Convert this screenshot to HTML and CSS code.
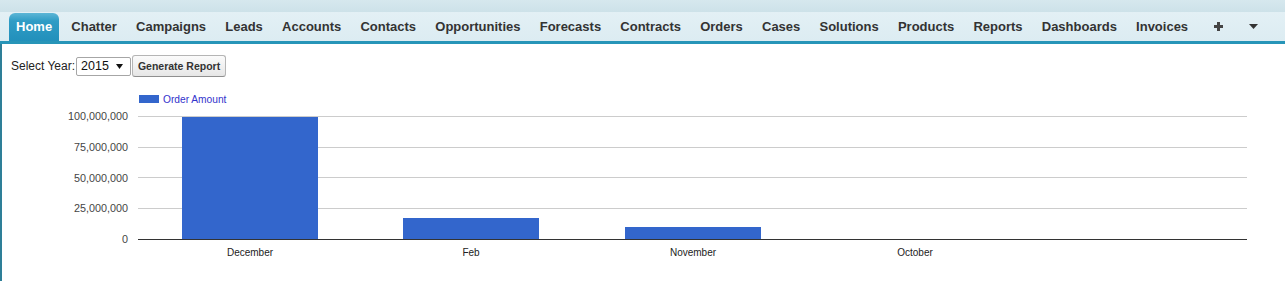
FILE: index.html
```html
<!DOCTYPE html>
<html lang="en">
<head>
<meta charset="utf-8">
<title>Orders by Month</title>
<link rel="stylesheet" href="styles.css">
</head>
<body>
<header class="topbar">
  <nav class="tabs">
    <a class="tab active" href="#">Home</a>
    <a class="tab" href="#">Chatter</a>
    <a class="tab" href="#">Campaigns</a>
    <a class="tab" href="#">Leads</a>
    <a class="tab" href="#">Accounts</a>
    <a class="tab" href="#">Contacts</a>
    <a class="tab" href="#">Opportunities</a>
    <a class="tab" href="#">Forecasts</a>
    <a class="tab" href="#">Contracts</a>
    <a class="tab" href="#">Orders</a>
    <a class="tab" href="#">Cases</a>
    <a class="tab" href="#">Solutions</a>
    <a class="tab" href="#">Products</a>
    <a class="tab" href="#">Reports</a>
    <a class="tab" href="#">Dashboards</a>
    <a class="tab" href="#">Invoices</a>
    <a class="tab tab-plus" href="#" aria-label="All Tabs">
      <svg class="ico" width="9" height="9" viewBox="0 0 9 9"><path d="M3 0h3v3h3v3H6v3H3V6H0V3h3z" fill="#444"/></svg>
    </a>
    <a class="tab tab-more" href="#" aria-label="More">
      <svg class="ico" width="9" height="5" viewBox="0 0 9 5"><path d="M0 0h9L4.5 5z" fill="#333"/></svg>
    </a>
  </nav>
</header>
<main class="content">
  <form class="controls">
    <label class="year-label" for="year">Select Year:</label>
    <span class="select-wrap">
      <select id="year" class="year-select">
        <option>2015</option>
        <option>2014</option>
        <option>2013</option>
      </select>
      <svg class="select-arrow" width="7" height="5" viewBox="0 0 7 5"><path d="M0 0h7L3.5 5z" fill="#111"/></svg>
    </span>
    <button type="button" class="btn">Generate Report</button>
  </form>
  <svg class="chart" width="1283" height="201" viewBox="0 0 1283 201">
    <rect x="137" y="15" width="20" height="8" fill="#3366cc"/>
    <text x="161" y="23" class="legend">Order Amount</text>

    <g class="grid">
      <line x1="136" y1="36.5" x2="1245" y2="36.5"/>
      <line x1="136" y1="67.5" x2="1245" y2="67.5"/>
      <line x1="136" y1="97.5" x2="1245" y2="97.5"/>
      <line x1="136" y1="128.5" x2="1245" y2="128.5"/>
    </g>

    <g class="ylabels">
      <text x="126" y="40">100,000,000</text>
      <text x="126" y="71">75,000,000</text>
      <text x="126" y="101.5">50,000,000</text>
      <text x="126" y="132">25,000,000</text>
      <text x="126" y="163">0</text>
    </g>

    <g class="bars">
      <rect x="180" y="37" width="136" height="122"/>
      <rect x="401" y="138" width="136" height="21"/>
      <rect x="623" y="147" width="136" height="12"/>
    </g>

    <line class="baseline" x1="136" y1="159.5" x2="1245" y2="159.5"/>

    <g class="xlabels">
      <text x="248" y="175.5">December</text>
      <text x="469" y="175.5">Feb</text>
      <text x="691" y="175.5">November</text>
      <text x="913" y="175.5">October</text>
    </g>
  </svg>
</main>
</body>
</html>
```
FILE: styles.css
```css
html, body {
  margin: 0;
  padding: 0;
  background: #ffffff;
}

body {
  font-family: "Liberation Sans", Arial, sans-serif;
  font-size: 12px;
  color: #222;
  width: 1285px;
  height: 281px;
  overflow: hidden;
}

.topbar {
  height: 41px;
  border-bottom: 3px solid #2795b8;
  background: linear-gradient(to bottom, #d6e8ee 0, #cde2e9 12px, #e3f0f5 12px, #dcecf2 41px);
}

.tabs {
  display: flex;
  align-items: flex-end;
  gap: 5.2px;
  height: 41px;
  box-sizing: border-box;
  padding: 13px 0 0 9px;
}

.tab {
  display: flex;
  align-items: center;
  height: 28px;
  box-sizing: border-box;
  padding: 0 7px 2px;
  font-weight: bold;
  font-size: 13px;
  color: #333;
  text-decoration: none;
  border-radius: 6px 6px 0 0;
  white-space: nowrap;
}

.tab.active {
  color: #ffffff;
  background: linear-gradient(to bottom, #5db6d6 0, #2f9cc5 8px, #2290bb 100%);
}

.tab-plus {
  padding: 0 14px 1px;
}

.tab-more {
  padding: 0 7px 1px;
}

.ico {
  display: block;
}

.content {
  height: 237px;
  border-left: 2px solid #2e7f98;
  box-sizing: border-box;
}

.controls {
  display: flex;
  align-items: center;
  height: 22px;
  margin: 0;
  padding: 11px 0 0 9px;
}

.year-label {
  font-size: 12px;
  color: #222;
}

.select-wrap {
  position: relative;
  display: block;
  margin-left: 1px;
}

.year-select {
  appearance: none;
  -webkit-appearance: none;
  display: block;
  width: 55px;
  height: 19px;
  box-sizing: border-box;
  margin: 0;
  padding: 0 0 0 4px;
  font-family: "Liberation Sans", Arial, sans-serif;
  font-size: 12.5px;
  color: #111;
  background: #ffffff;
  border: 1px solid #a6a6a6;
  border-radius: 2px;
}

.select-arrow {
  position: absolute;
  right: 8px;
  top: 7px;
  pointer-events: none;
}

.btn {
  display: block;
  height: 22px;
  width: 94px;
  box-sizing: border-box;
  margin: 0 0 0 1px;
  padding: 0;
  font-family: "Liberation Sans", Arial, sans-serif;
  font-weight: bold;
  font-size: 10.5px;
  color: #333;
  background: linear-gradient(to bottom, #fbfbfb 0, #f1f1f1 50%, #e6e6e6 100%);
  border: 1px solid #b5b5b5;
  border-bottom-color: #8f8f8f;
  border-radius: 3px;
}

.chart {
  display: block;
  margin-top: 3px;
  font-family: "Liberation Sans", Arial, sans-serif;
}

.legend {
  font-size: 10.2px;
  fill: #3333cc;
}

.grid line {
  stroke: #cccccc;
  stroke-width: 1;
}

.baseline {
  stroke: #333333;
  stroke-width: 1;
}

.ylabels text {
  font-size: 10.8px;
  fill: #444444;
  text-anchor: end;
}

.bars rect {
  fill: #3366cc;
}

.xlabels text {
  font-size: 10px;
  fill: #222222;
  text-anchor: middle;
}
```
